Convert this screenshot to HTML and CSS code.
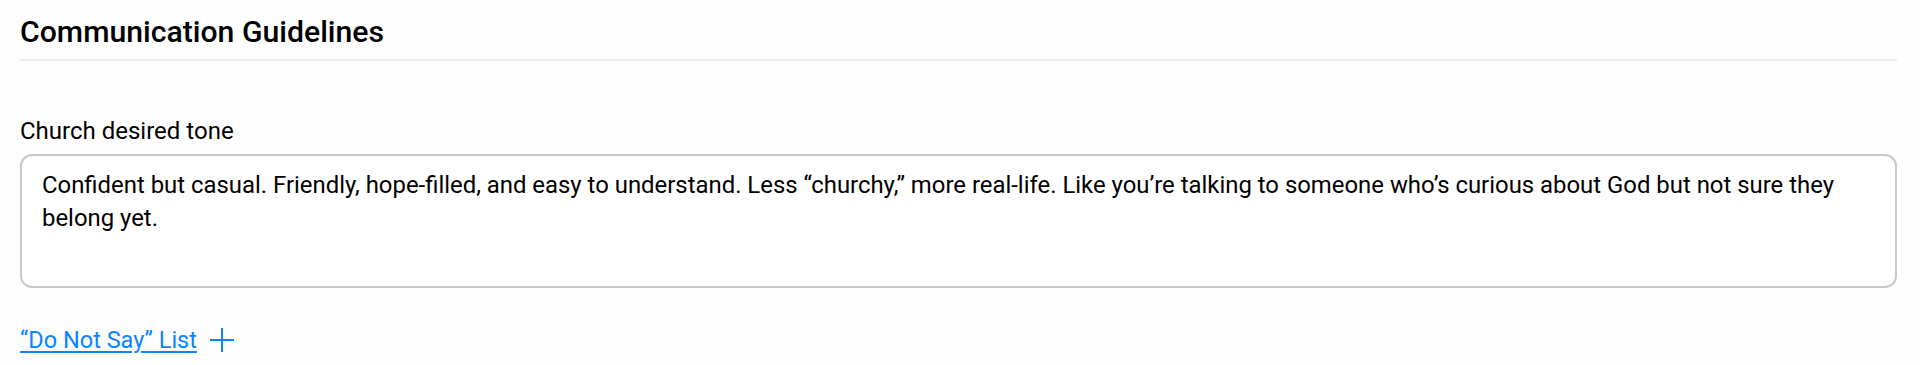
FILE: index.html
```html
<!DOCTYPE html>
<html lang="en">
<head>
<meta charset="utf-8">
<title>Communication Guidelines</title>
<link rel="stylesheet" href="styles.css">
</head>
<body>
<section class="panel">
  <h2 class="panel-title">Communication Guidelines</h2>
  <div class="field">
    <label class="field-label" for="tone">Church desired tone</label>
    <div class="textarea" id="tone">Confident but casual. Friendly, hope-filled, and easy to understand. Less “churchy,” more real-life. Like you’re talking to someone who’s curious about God but not sure they belong yet.</div>
  </div>
  <div class="list-row">
    <a class="list-link" href="#">“Do Not Say” List</a>
    <button class="add-btn" type="button" aria-label="Add">
      <svg width="26" height="26" viewBox="0 0 26 26"><path d="M13 1v24M1 13h24" stroke="currentColor" stroke-width="2" fill="none"/></svg>
    </button>
  </div>
</section>
</body>
</html>
```

FILE: styles.css
```css
* { box-sizing: border-box; }
html, body { margin: 0; background: #fefefe; }
body {
  font-family: Roboto, "Noto Sans", sans-serif;
  color: #000;
}
.panel {
  padding: 14px 23px 0 20px;
}
.panel-title {
  margin: 0;
  font-size: 30.2px;
  font-weight: 500;
  line-height: 36px;
  padding-bottom: 9px;
  border-bottom: 2px solid #eeeeee;
}
.field {
  margin-top: 56px;
}
.field-label {
  display: block;
  font-size: 24px;
  line-height: 28px;
  margin-bottom: 9px;
}
.textarea {
  border: 2px solid #c9c9c9;
  border-radius: 12px;
  background: #fff;
  height: 134px;
  padding: 13px 40px 13px 20px;
  font-size: 23.9px;
  line-height: 33px;
}
.list-row {
  display: flex;
  align-items: center;
  gap: 12px;
  margin-top: 38px;
}
.list-link {
  color: #0b84ff;
  font-size: 23.5px;
  line-height: 28px;
  text-decoration: underline;
  text-underline-offset: 3px;
}
.add-btn {
  border: 0;
  background: none;
  padding: 0;
  color: #0b84ff;
  display: flex;
}
```
